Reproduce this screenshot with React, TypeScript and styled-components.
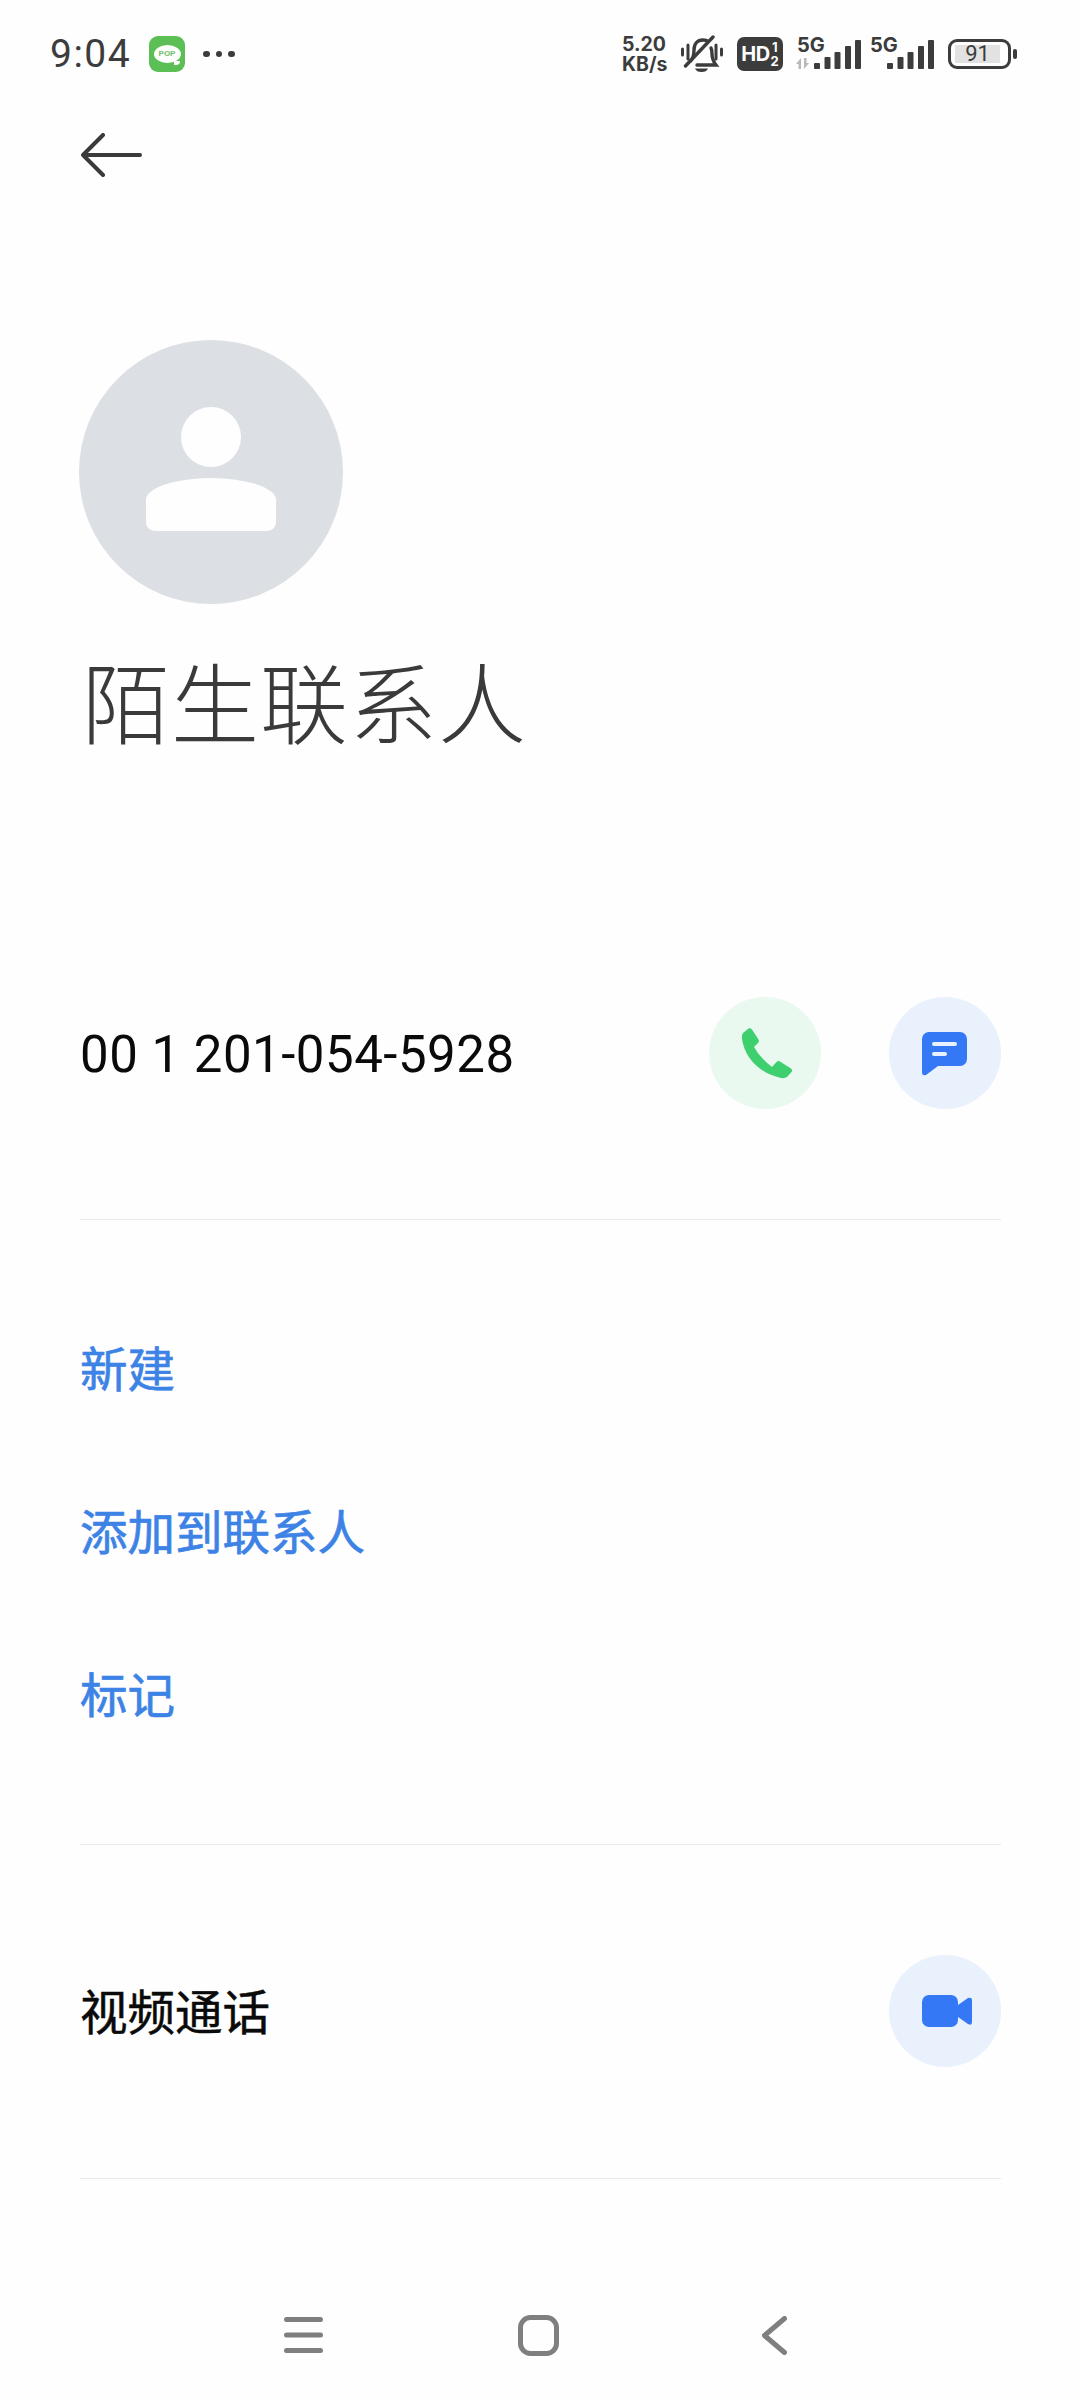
import styled, { createGlobalStyle } from "styled-components"

const GlobalStyle = createGlobalStyle`
  html, body {
    margin: 0;
    padding: 0;
    background: #fefefe;
  }
  * {
    box-sizing: border-box;
  }
`

const Page = styled.div`
  width: 1080px;
  height: 2400px;
  display: flex;
  flex-direction: column;
  background: #fefefe;
  font-family: "Noto Sans CJK SC", "Noto Sans", sans-serif;
  overflow: hidden;
`

const StatusBar = styled.div`
  height: 108px;
  flex-shrink: 0;
  display: flex;
  align-items: center;
  justify-content: space-between;
  padding: 0 63px 0 50px;
  color: #3c3c3c;
`

const StatusLeft = styled.div`
  display: flex;
  align-items: center;
`

const Time = styled.span`
  font-family: Roboto, sans-serif;
  font-size: 39px;
  line-height: 44px;
  width: 99px;
  letter-spacing: 1.5px;
`

const PopIcon = styled.div`
  position: relative;
  width: 36px;
  height: 36px;
  margin-right: 18px;
  border-radius: 9px;
  background: #5cbf55;
  display: flex;
  align-items: center;
  justify-content: center;
`

const PopBubble = styled.span`
  width: 27px;
  height: 18px;
  border-radius: 50%;
  background: #fdfffc;
  color: #6fc069;
  font-family: "Liberation Sans", sans-serif;
  font-size: 8px;
  font-weight: 700;
  line-height: 18px;
  text-align: center;
`

const PopTail = styled.span`
  position: absolute;
  right: 5px;
  bottom: 7px;
  width: 6px;
  height: 4px;
  background: #fdfffc;
  border-radius: 0 0 4px 0;
`

const Dots = styled.div`
  display: flex;
  gap: 6px;
`

const Dot = styled.span`
  width: 6.500px;
  height: 6.500px;
  border-radius: 50%;
  background: #3c3c3c;
`

const StatusRight = styled.div`
  display: flex;
  align-items: center;
`

const Speed = styled.div`
  width: 58px;
  display: flex;
  flex-direction: column;
  font-family: Inter, sans-serif;
  font-size: 19.500px;
  font-weight: 700;
  line-height: 20px;
`

const BellIcon = styled.svg`
  width: 44px;
  height: 38px;
  margin-right: 13px;
`

const HdBadge = styled.div`
  width: 46px;
  height: 34px;
  margin-right: 12px;
  border-radius: 7px;
  background: #3c3c3c;
  color: #fefefe;
  display: flex;
  align-items: center;
  justify-content: center;
  gap: 1px;
  font-family: Inter, sans-serif;
  font-weight: 700;
`

const HdText = styled.span`
  font-size: 20px;
  line-height: 34px;
  letter-spacing: -0.5px;
`

const HdSim = styled.span`
  font-size: 13px;
  line-height: 14px;
  display: flex;
  flex-direction: column;
  align-items: center;
`

const SignalGroup = styled.div`
  position: relative;
  width: 66px;
  height: 32px;
  margin-right: ${({ $gap }: { $gap: number }) => $gap}px;
`

const NetLabel = styled.span`
  position: absolute;
  left: 2px;
  top: -2px;
  font-family: Inter, sans-serif;
  font-size: 20px;
  font-weight: 700;
  line-height: 19px;
`

const Battery = styled.div`
  width: 63px;
  height: 30px;
  border: 3px solid #3c3c3c;
  border-radius: 9px;
  padding: 3px 8px 3px 4px;
  display: flex;
`

const BatteryFill = styled.div`
  flex: 1;
  background: #e2e2e2;
  font-family: Roboto, sans-serif;
  font-size: 22px;
  line-height: 18px;
  text-align: center;
`

const BatteryNub = styled.span`
  width: 4px;
  height: 10px;
  margin-left: 2px;
  border-radius: 2px;
  background: #3c3c3c;
`

const BackRow = styled.div`
  height: 94px;
  flex-shrink: 0;
  display: flex;
  align-items: center;
  padding-left: 81px;
`

const Content = styled.div`
  padding: 0 79px 0 80px;
  display: flex;
  flex-direction: column;
`

const Avatar = styled.div`
  width: 264px;
  height: 264px;
  margin: 138px 0 0 -1px;
  border-radius: 50%;
  background: #dcdfe4;
  display: flex;
  flex-direction: column;
  align-items: center;
  padding-top: 67px;
`

const AvatarHead = styled.span`
  width: 60px;
  height: 60px;
  border-radius: 50%;
  background: #fefefe;
`

const AvatarBody = styled.span`
  width: 130px;
  height: 53px;
  margin-top: 11px;
  background: #fefefe;
  border-radius: 65px 65px 10px 10px / 22px 22px 8px 8px;
`

const Name = styled.h1`
  margin: 45px 0 0 2px;
  font-size: 88px;
  font-weight: 300;
  line-height: 100px;
  letter-spacing: 1px;
  color: #3a3a3a;
`

const CallRow = styled.div<{ $top: number; $bottom: number }>`
  display: flex;
  align-items: center;
  justify-content: space-between;
  margin-top: ${({ $top }) => $top}px;
  padding-bottom: ${({ $bottom }) => $bottom}px;
  border-bottom: 1px solid #e9e9e9;
`

const PhoneNumber = styled.span`
  font-family: Roboto, sans-serif;
  font-size: 51px;
  letter-spacing: 0.5px;
  padding-top: 2px;
  color: #0a0a0a;
`

const RowLabel = styled.span`
  font-size: 47.500px;
  line-height: 60px;
  padding-bottom: 2px;
  color: #0a0a0a;
  -webkit-text-stroke: 0.5px #0a0a0a;
`

const RoundButtons = styled.div`
  display: flex;
  gap: 68px;
`

const RoundButton = styled.div<{ $tint: string }>`
  width: 112px;
  height: 112px;
  border-radius: 50%;
  background: ${({ $tint }) => $tint};
`

const ActionList = styled.div`
  display: flex;
  flex-direction: column;
  padding: 66px 0 69px;
  border-bottom: 1px solid #e9e9e9;
`

const ActionItem = styled.div`
  height: 163px;
  display: flex;
  align-items: center;
  padding-bottom: 2px;
  font-size: 47.500px;
  color: #3d83e6;
  -webkit-text-stroke: 0.7px #3d83e6;
`

const NavBar = styled.div`
  margin-top: auto;
  height: 130px;
  display: flex;
  align-items: center;
  padding-left: 284px;
`

const NavIcon = styled.svg<{ $gap: number }>`
  margin-right: ${({ $gap }) => $gap}px;
`

const bars = [
  { x: 19, top: 25 },
  { x: 29.500, top: 19 },
  { x: 39.500, top: 14 },
  { x: 50, top: 8 },
  { x: 60, top: 2 },
]

const Signal = ({ arrows }: { arrows?: boolean }) => (
  <svg width="66" height="32" viewBox="0 0 66 32">
    {bars.map((bar) => (
      <rect key={bar.x} x={bar.x} y={bar.top} width="6" height={31 - bar.top} rx="1" fill="#3c3c3c" />
    ))}
    {arrows && (
      <g fill="#b9b9b9">
        <path d="M1 26 L6 20 V31 H3.500 V26Z" />
        <path d="M14 25 L9 31 V20 H11.500 V25Z" />
      </g>
    )}
  </svg>
)

export default function App() {
  return (
    <Page>
      <GlobalStyle />
      <StatusBar>
        <StatusLeft>
          <Time>9:04</Time>
          <PopIcon>
            <PopBubble>POP</PopBubble>
            <PopTail />
          </PopIcon>
          <Dots>
            <Dot />
            <Dot />
            <Dot />
          </Dots>
        </StatusLeft>
        <StatusRight>
          <Speed>
            <span>5.20</span>
            <span>KB/s</span>
          </Speed>
          <BellIcon viewBox="0 0 44 38" fill="none" stroke="#3c3c3c" strokeLinecap="round" strokeWidth="3.400">
            <path d="M2.500 14v6M8 10v14M36 10v14M41.500 14v6" strokeWidth="3" />
            <path d="M10.500 26c3-3 3.500-6 3.500-11 0-6 3-10 9-10 2 0 4 .5 5 1.500M31 13c1 2 1 3 1 6 0 4 1 7 4 11H17" />
            <path d="M33 2 5.500 31" />
            <path d="M15 33.500h13c-1 2.500-3 3.500-6.500 3.500s-5.500-1-6.500-3.500z" fill="#3c3c3c" stroke="none" />
          </BellIcon>
          <HdBadge>
            <HdText>HD</HdText>
            <HdSim>
              <span>1</span>
              <span>2</span>
            </HdSim>
          </HdBadge>
          <SignalGroup $gap={7}>
            <NetLabel>5G</NetLabel>
            <Signal arrows />
          </SignalGroup>
          <SignalGroup $gap={14}>
            <NetLabel>5G</NetLabel>
            <Signal />
          </SignalGroup>
          <Battery>
            <BatteryFill>91</BatteryFill>
          </Battery>
          <BatteryNub />
        </StatusRight>
      </StatusBar>

      <BackRow>
        <svg width="61" height="44" viewBox="0 0 61 44" fill="none" stroke="#3a3a3a" strokeWidth="4" strokeLinecap="round" strokeLinejoin="round">
          <path d="M59 22H2M22 2 2 22l20 20" />
        </svg>
      </BackRow>

      <Content>
        <Avatar>
          <AvatarHead />
          <AvatarBody />
        </Avatar>
        <Name>陌生联系人</Name>

        <CallRow $top={248} $bottom={110}>
          <PhoneNumber>00 1 201-054-5928</PhoneNumber>
          <RoundButtons>
            <RoundButton $tint="#eaf9ef">
              <svg width="112" height="112" viewBox="0 0 112 112">
                <path
                  fill="#3ecf6e"
                  d="M34 36 39.500 31.500Q41.500 30.500 43 32.500L49.500 42.500Q50.500 44.500 49 46L45 50Q51 61 63 70L67.500 65Q69 63.500 71 64.500L82 71.500Q84 73 82.500 75L78 80Q76 81.500 72 81C52 77 36 62 33 42Q32.500 38 34 36Z"
                />
              </svg>
            </RoundButton>
            <RoundButton $tint="#e9f1fd">
              <svg width="112" height="112" viewBox="0 0 112 112">
                <path
                  fill="#3478f6"
                  d="M40 35H71a7 7 0 0 1 7 7V62a7 7 0 0 1-7 7H49L37 78Q33 79 33 75V42a7 7 0 0 1 7-7Z"
                />
                <rect x="43" y="45" width="25" height="4" rx="2" fill="#e9f1fd" />
                <rect x="43" y="55" width="15" height="4" rx="2" fill="#e9f1fd" />
              </svg>
            </RoundButton>
          </RoundButtons>
        </CallRow>

        <ActionList>
          <ActionItem>新建</ActionItem>
          <ActionItem>添加到联系人</ActionItem>
          <ActionItem>标记</ActionItem>
        </ActionList>

        <CallRow $top={110} $bottom={111}>
          <RowLabel>视频通话</RowLabel>
          <RoundButton $tint="#e9f1fd">
            <svg width="112" height="112" viewBox="0 0 112 112">
              <rect x="33" y="40" width="36" height="32" rx="7" fill="#3478f6" />
              <path fill="#3478f6" d="M69 50 79 43Q83 42 83 45V67Q83 71 79 69L69 62Z" />
            </svg>
          </RoundButton>
        </CallRow>
      </Content>

      <NavBar>
        <NavIcon $gap={195} width="39" height="36" viewBox="0 0 39 36" stroke="#7f7f7f" strokeWidth="5" strokeLinecap="round">
          <path d="M2.500 2.500h34M2.500 18h34M2.500 33.500h34" />
        </NavIcon>
        <NavIcon $gap={203} width="41" height="41" viewBox="0 0 41 41" fill="none" stroke="#7f7f7f" strokeWidth="5">
          <rect x="2.500" y="2.500" width="36" height="36" rx="10" />
        </NavIcon>
        <NavIcon $gap={0} width="25" height="39" viewBox="0 0 25 39" fill="none" stroke="#7f7f7f" strokeWidth="5" strokeLinecap="round" strokeLinejoin="round">
          <path d="M22.500 2.500 2.500 19.500l20 17" />
        </NavIcon>
      </NavBar>
    </Page>
  )
}
